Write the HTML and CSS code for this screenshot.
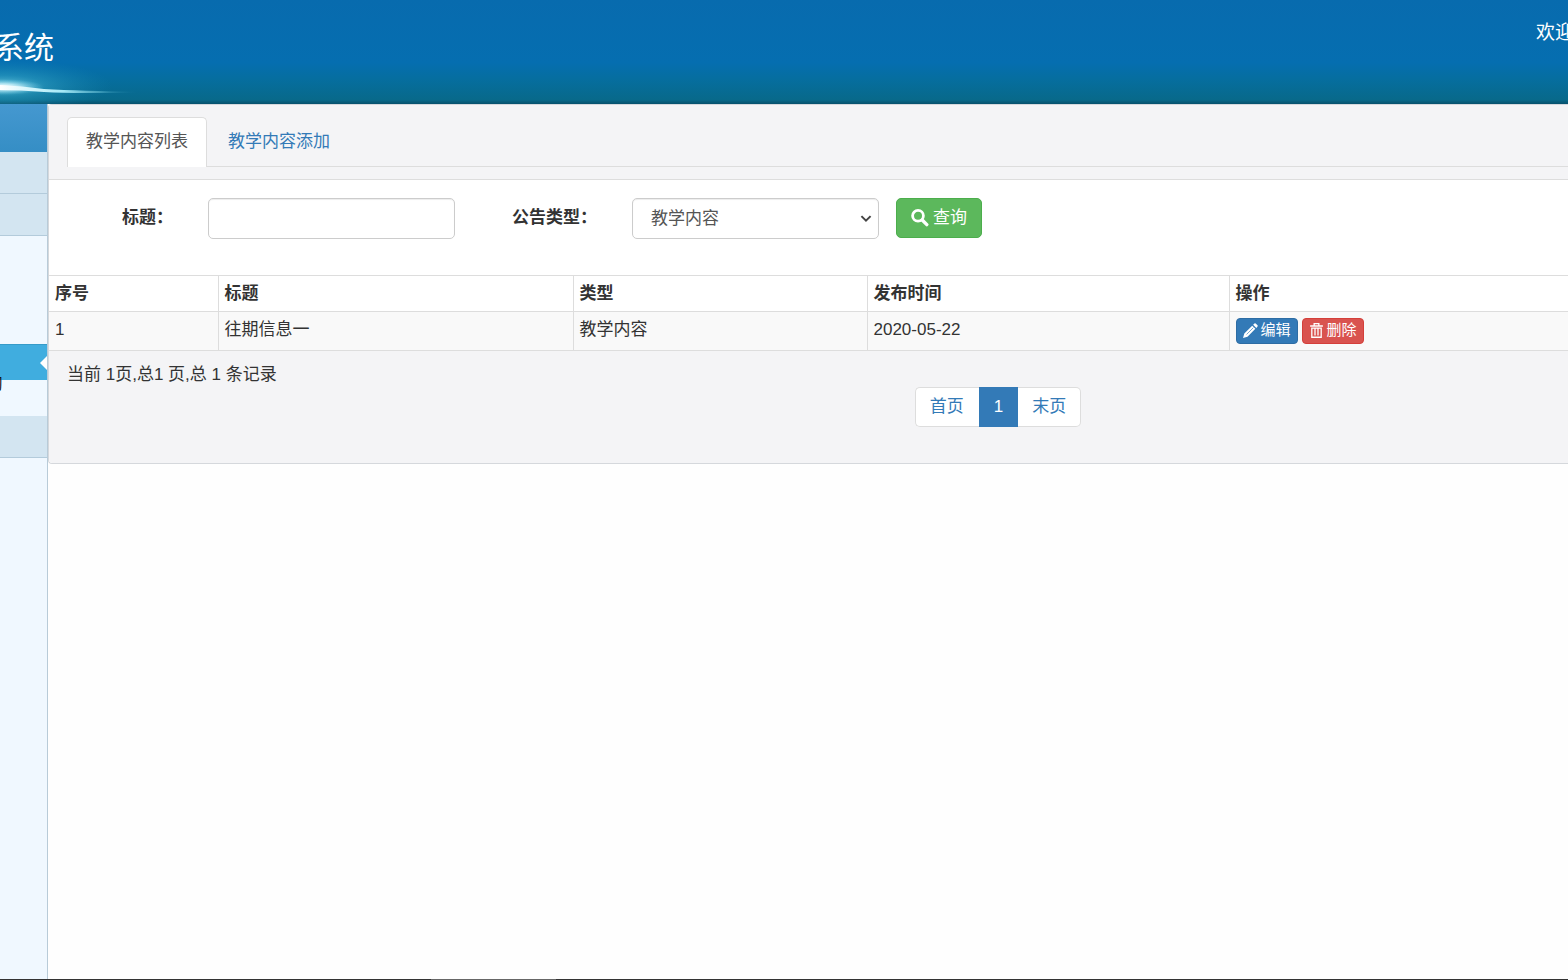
FILE: index.html
```html
<!DOCTYPE html>
<html lang="zh-CN">
<head>
<meta charset="utf-8">
<title>教学内容列表</title>
<link rel="stylesheet" href="styles.css">
</head>
<body>
<header class="banner">
  <svg class="flare" viewBox="0 0 180 60" aria-hidden="true">
    <defs>
      <radialGradient id="glow"><stop offset="0" stop-color="#8fe4f5" stop-opacity=".75"/><stop offset=".4" stop-color="#3fb4d6" stop-opacity=".4"/><stop offset="1" stop-color="#1a8fc0" stop-opacity="0"/></radialGradient>
      <radialGradient id="core"><stop offset="0" stop-color="#fff"/><stop offset=".4" stop-color="#d8f8ff" stop-opacity=".7"/><stop offset="1" stop-color="#6fd0ea" stop-opacity="0"/></radialGradient>
      <linearGradient id="ray" x1="0" x2="1"><stop offset="0" stop-color="#fff"/><stop offset=".45" stop-color="#a5e9f7"/><stop offset="1" stop-color="#2f9cba" stop-opacity="0"/></linearGradient>
    </defs>
    <ellipse cx="2" cy="42" rx="110" ry="27" fill="url(#glow)"/>
    <ellipse cx="2" cy="43" rx="42" ry="8" fill="url(#core)"/>
    <path d="M0 41Q22 42 44 45Q80 47 140 48Q80 50 44 48Q20 46 0 46Z" fill="url(#ray)"/>
  </svg>
  <h1 class="brand">系统</h1>
  <p class="welcome">欢迎</p>
</header>
<div class="layout">
  <nav class="side">
    <div class="side-head"></div>
    <div class="side-group"></div>
    <div class="side-group"></div>
    <div class="side-list"></div>
    <div class="side-active"></div>
    <div class="side-item"><span>习</span></div>
    <div class="side-group"></div>
  </nav>
  <main class="main">
    <section class="panel">
      <div class="panel-head">
        <div class="tabs">
          <a class="tab tab-on" href="#list">教学内容列表</a>
          <a class="tab" href="#add">教学内容添加</a>
        </div>
      </div>
      <form class="search">
        <label class="label-title" for="title">标题：</label>
        <input class="field" id="title" type="text">
        <label class="label-type" for="type">公告类型：</label>
        <div class="select">
          <select class="field" id="type"><option>教学内容</option></select>
          <svg class="chevron" viewBox="0 0 10 7" aria-hidden="true"><path d="M1 1L5 5L9 1" fill="none" stroke="#444" stroke-width="1.7"/></svg>
        </div>
        <button class="query" type="button">
          <svg class="icon" viewBox="0 0 18 18" aria-hidden="true"><circle cx="7" cy="6.8" r="5.4" fill="none" stroke="#fff" stroke-width="2.8"/><path d="M11.2 11L15.8 15.6" stroke="#fff" stroke-width="3.4" stroke-linecap="round"/></svg>
          <span>查询</span>
        </button>
      </form>
      <table class="grid">
        <thead><tr><th class="c1">序号</th><th class="c2">标题</th><th class="c3">类型</th><th class="c4">发布时间</th><th>操作</th></tr></thead>
        <tbody><tr><td>1</td><td>往期信息一</td><td>教学内容</td><td>2020-05-22</td><td>
          <div class="actions">
            <button class="mini edit" type="button"><svg class="mini-icon" viewBox="0 0 16 16" aria-hidden="true"><path d="M0 16L1.4 11.2L9.8 2.8L13.2 6.2L4.8 14.6ZM10.8 1.8L12.2 .5Q12.9 0 13.5 .5L15.5 2.5Q16 3.1 15.5 3.8L14.2 5.2Z" fill="#fff"/><path d="M3.8 12.2L11 5" stroke="#337ab7" stroke-width=".7"/></svg><span>编辑</span></button>
            <button class="mini delete" type="button"><svg class="mini-icon" viewBox="0 0 16 16" aria-hidden="true"><path d="M5.5 2.6V.7H10.5V2.6M1.2 3.2H14.8" fill="none" stroke="#fff" stroke-width="1.4"/><path d="M3 5.4V15.2H13V5.4M6.4 5.4V13.4M9.6 5.4V13.4M2.3 5.4H13.7" fill="none" stroke="#fff" stroke-width="1.4"/></svg><span>删除</span></button>
          </div>
        </td></tr></tbody>
      </table>
      <footer class="foot">
        <p class="count">当前 1页,总1 页,总 1 条记录</p>
        <div class="pager"><a href="#first">首页</a><a class="page-on" href="#1">1</a><a href="#last">末页</a></div>
      </footer>
    </section>
  </main>
</div>
<div class="taskbar"><div class="task"></div></div>
</body>
</html>
```

FILE: styles.css
```css
* { box-sizing: border-box; }
body {
  margin: 0;
  height: 100vh;
  display: flex;
  flex-direction: column;
  overflow: hidden;
  background: #fefefe;
  color: #333;
  font: 17px/24px "Liberation Sans", "Noto Sans CJK SC", sans-serif;
}
h1, p { margin: 0; font-weight: 400; }
a { color: #337ab7; text-decoration: none; }
button, input, select { font: inherit; }
.banner {
  position: relative;
  flex: none;
  height: 104px;
  overflow: hidden;
  display: flex;
  justify-content: space-between;
  align-items: flex-start;
  color: #fff;
  background: linear-gradient(#086bae 0, #056eb0 60%, #066e9f 76%, #08698a 96%, #07506c 100%);
}
.flare { position: absolute; left: 0; top: 44px; width: 180px; height: 60px; }
.brand { position: relative; margin: 26px 0 0 -6px; font-size: 30px; line-height: 44px; }
.welcome { width: 32px; padding-top: 21px; font-size: 19px; white-space: nowrap; }
.layout { flex: 1; display: flex; min-height: 0; }
.side { flex: none; width: 48px; border-right: 1px solid #b8cbd8; background: #f0f8ff; overflow: hidden; }
.side-head { height: 48px; background: linear-gradient(#4598d0, #358ec5); }
.side-group { height: 42px; background: #d3e5f1; border-bottom: 1px solid #b3cbdb; }
.side-list { height: 108px; }
.side-active { height: 36px; display: flex; align-items: center; justify-content: flex-end; background: #40addf; border-top: 1px solid #369bc9; }
.side-active::after { content: ""; border: 7px solid transparent; border-left: 0; border-right-color: #fff; }
.side-item { height: 36px; color: #111; }
.side-item span { display: block; width: 3px; direction: rtl; line-height: 8px; font-size: 15px; white-space: nowrap; }
.main { flex: 1; min-width: 0; }
.panel { border: 1px solid #d5d8dc; border-right: 0; border-radius: 4px 0 0 4px; background: #fff; }
.panel-head { padding: 12px 0 12px 18px; background: #f4f4f6; border-bottom: 1px solid #ddd; }
.tabs { display: flex; gap: 2px; border-bottom: 1px solid #ddd; }
.tab { padding: 12px 18px 13px; border: 1px solid transparent; border-bottom: 0; margin-bottom: -1px; }
.tab-on { color: #555; background: #fff; border-color: #ddd; border-radius: 5px 5px 0 0; }
.search { display: flex; align-items: flex-start; padding: 18px 18px 36px 73px; }
.search label { font-weight: 700; padding-top: 8px; white-space: nowrap; }
.label-title { width: 86px; }
.label-type { width: 120px; margin-left: 57px; }
.field { width: 247px; height: 41px; padding: 6px 18px; border: 1px solid #ccc; border-radius: 5px; background: #fff; color: #555; box-shadow: inset 0 1px 1px rgba(0,0,0,.075); appearance: none; }
.select { position: relative; }
.chevron { position: absolute; right: 7px; top: 17px; width: 12px; height: 8px; pointer-events: none; }
.query { display: flex; align-items: center; gap: 4px; height: 40px; margin-left: 17px; padding: 0 14px; border: 1px solid #4cae4c; border-radius: 5px; background: #5cb85c; color: #fff; }
.icon { width: 18px; height: 18px; }
.grid { width: 100%; table-layout: fixed; border-collapse: collapse; border-top: 1px solid #ddd; }
.grid th, .grid td { height: 36px; padding: 6px 6px 5px; text-align: left; vertical-align: top; border-bottom: 1px solid #ddd; border-left: 1px solid #ddd; }
.grid th:first-child, .grid td:first-child { border-left: 0; }
.grid td { background: #f9f9f9; }
.c1 { width: 169px; }
.c2 { width: 355px; }
.c3 { width: 294px; }
.c4 { width: 362px; }
.actions { display: flex; gap: 4px; padding-bottom: 1px; }
.mini { display: flex; align-items: center; gap: 3px; height: 26px; padding: 0 6px 2px; border: 1px solid #2e6da4; border-radius: 4px; background: #337ab7; color: #fff; font-size: 15px; line-height: 20px; }
.delete { background: #d9534f; border-color: #d43f3a; }
.mini-icon { width: 15px; height: 15px; }
.foot { height: 112px; padding: 12px 18px; background: #f4f4f6; border-radius: 0 0 0 4px; }
.pager { display: flex; justify-content: center; margin-left: 379px; }
.pager a { padding: 7px 14px; border: 1px solid #ddd; background: #fff; }
.pager a:first-child { border-radius: 5px 0 0 5px; border-right: 0; padding-right: 15px; }
.pager a:last-child { border-radius: 0 5px 5px 0; border-left: 0; }
.pager .page-on { color: #fff; background: #337ab7; border-color: #337ab7; }
.taskbar { flex: none; height: 1px; background: #333; }
.task { height: 1px; width: 125px; margin-left: 431px; background: #666; }
```
